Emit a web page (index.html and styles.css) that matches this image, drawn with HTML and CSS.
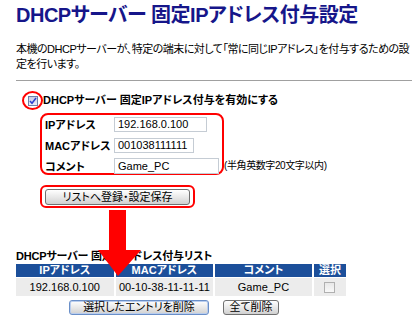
FILE: index.html
```html
<!DOCTYPE html>
<html lang="ja">
<head>
<meta charset="utf-8">
<title>DHCPサーバー 固定IPアドレス付与設定</title>
<link rel="stylesheet" href="styles.css">
</head>
<body>
<main class="page">
  <h1 class="title">DHCPサーバー 固定IPアドレス付与設定</h1>
  <p class="desc">本機のDHCPサーバーが、特定の端末に対して「常に同じIPアドレス」を付与するための設定を行います。</p>
  <hr class="rule">

  <form class="settings">
    <label class="enable">
      <span class="ring">
        <span class="xp-check">
          <svg width="8" height="8" viewBox="0 0 8 8"><path d="M1 4 L3 6.3 L7 1" fill="none" stroke="#2b3fd0" stroke-width="1.5"/></svg>
        </span>
      </span>
      <span class="enable-text">DHCPサーバー 固定IPアドレス付与を有効にする</span>
    </label>

    <div class="fields-row">
      <div class="fields">
        <span class="lbl">IPアドレス</span><input class="inp inp-ip" value="192.168.0.100">
        <span class="lbl">MACアドレス</span><input class="inp inp-mac" value="001038111111">
        <span class="lbl">コメント</span><input class="inp inp-cmt" value="Game_PC">
      </div>
      <span class="note">(半角英数字20文字以内)</span>
    </div>

    <div class="save-ring"><button type="button" class="btn btn-save">リストへ登録・設定保存</button></div>
  </form>

  <section class="list">
    <h2 class="list-title">DHCPサーバー 固定IPアドレス付与リスト</h2>
    <table class="tbl">
      <thead>
        <tr><th class="c-ip">IPアドレス</th><th class="c-mac">MACアドレス</th><th class="c-cmt">コメント</th><th class="c-sel">選択</th></tr>
      </thead>
      <tbody>
        <tr><td>192.168.0.100</td><td class="mac">00-10-38-11-11-11</td><td>Game_PC</td><td><span class="dis-check"></span></td></tr>
      </tbody>
    </table>
    <div class="actions">
      <button type="button" class="btn btn-del focused">選択したエントリを削除</button>
      <button type="button" class="btn btn-all">全て削除</button>
    </div>
  </section>

  <svg class="arrow" width="44" height="66" viewBox="0 0 44 66">
    <rect x="11" y="0" width="17" height="41" fill="#f00"/>
    <polygon points="0,40 43,40 20,66" fill="#f00"/>
  </svg>
</main>
</body>
</html>
```
FILE: styles.css
```css
* { box-sizing: border-box; }
html, body { margin: 0; padding: 0; background: #fff; }
body {
  font-family: "Liberation Sans", "Noto Sans CJK JP", sans-serif;
  color: #000;
}
.page {
  position: relative;
  width: 420px;
  height: 328px;
  padding: 3px 8px 0 16px;
  overflow: hidden;
}
.title {
  margin: 0;
  font-size: 20px;
  line-height: 24px;
  font-weight: bold;
  color: #16168a;
  letter-spacing: -0.5px;
  font-feature-settings: "palt";
  white-space: nowrap;
}
.desc {
  margin: 15px 0 0;
  font-size: 11px;
  line-height: 15px;
  letter-spacing: -0.5px;
  font-feature-settings: "palt";
}
.rule {
  margin: 8px 0 0;
  border: 0;
  border-top: 1px solid #a0a0a0;
  height: 0;
}
.settings { display: flex; flex-direction: column; align-items: flex-start; }
.enable {
  display: flex;
  align-items: center;
  margin: 10px 0 0 6px;
}
.ring {
  width: 21px;
  height: 19px;
  border: 2px solid #f00;
  border-radius: 50%;
  display: flex;
  align-items: center;
  justify-content: center;
}
.xp-check {
  width: 10px;
  height: 10px;
  border: 1px solid #6d7fa8;
  background: linear-gradient(#c9cde6, #eceef8);
  display: flex;
  align-items: center;
  justify-content: center;
}
.xp-check svg { display: block; }
.enable-text {
  font-size: 11px;
  font-weight: bold;
  line-height: 13px;
  font-feature-settings: "palt";
  white-space: nowrap;
}
.fields-row {
  display: flex;
  align-items: flex-end;
  margin: 3px 0 0 24px;
}
.fields {
  display: grid;
  grid-template-columns: 69px auto;
  row-gap: 5px;
  align-items: center;
  justify-items: start;
  border: 2px solid #f00;
  border-radius: 8px;
  padding: 1px 3px 0 3px;
  width: 184px;
  height: 62px;
}
.lbl {
  font-size: 11px;
  font-weight: bold;
  font-feature-settings: "palt";
  white-space: nowrap;
}
.inp {
  height: 15px;
  border: 1px solid #c5ccd4;
  padding: 0 3px;
  font: 11px "Liberation Sans", "Noto Sans CJK JP", sans-serif;
  color: #000;
  background: #fff;
}
.inp-ip { width: 93px; }
.inp-mac { width: 80px; }
.inp-cmt { width: 105px; height: 16px; }
.note {
  font-size: 10px;
  line-height: 13px;
  letter-spacing: -0.4px;
  margin: 0 0 3px 0;
  font-feature-settings: "palt";
  white-space: nowrap;
}
.save-ring {
  margin: 10px 0 0 24px;
  border: 2px solid #f00;
  border-radius: 6px;
  padding: 2px 3px 1px 3px;
}
.btn {
  display: block;
  font: 11px "Liberation Sans", "Noto Sans CJK JP", sans-serif;
  font-feature-settings: "palt";
  color: #000;
  background: linear-gradient(#ffffff, #e4e4e4 60%, #d0d0d0);
  border: 1px solid #707070;
  border-radius: 3px;
  padding: 0;
  line-height: 13px;
}
.btn-save { width: 145px; height: 16px; }
.list-title {
  margin: 42px 0 0;
  font-size: 11px;
  line-height: 13px;
  font-weight: bold;
  letter-spacing: -0.2px;
  font-feature-settings: "palt";
}
.tbl {
  border-collapse: separate;
  border-spacing: 2px 1px;
  margin: 0 0 0 -2px;
  font-size: 11px;
  font-feature-settings: "palt";
  table-layout: fixed;
  width: 334px;
}
.tbl th {
  background: #1c4f9a;
  color: #fff;
  font-weight: bold;
  height: 13px;
  padding: 0;
  line-height: 13px;
}
.tbl td {
  background: #ececec;
  height: 18px;
  padding: 0;
  text-align: center;
  line-height: 13px;
  white-space: nowrap;
}
.c-ip { width: 97px; }
.c-mac { width: 97px; }
.c-cmt { width: 96px; }
.c-sel { width: 32px; }
.tbl td.mac { letter-spacing: 0.1px; }
.dis-check {
  display: inline-block;
  width: 11px;
  height: 11px;
  border: 1px solid #b0b0b0;
  background: linear-gradient(#e8e8e8, #f8f8f8);
  vertical-align: middle;
}
.actions {
  display: flex;
  gap: 14px;
  margin: 3px 0 0 53px;
}
.btn-del { width: 140px; height: 15px; }
.btn-all { width: 56px; height: 15px; }
.btn.focused { border-color: #6a8fc8; box-shadow: inset 0 0 0 1px #b9cdee; }
.arrow {
  position: absolute;
  left: 98px;
  top: 210px;
}
```
